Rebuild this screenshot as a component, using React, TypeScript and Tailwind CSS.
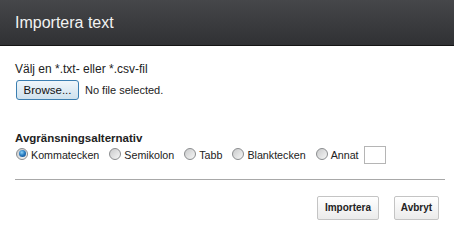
import React from "react";

function Radio({ checked, label }: { checked?: boolean; label: string }) {
  return (
    <label className="mr-[10px] flex items-center">
      <span className="relative mb-[3px] flex h-[12px] w-[12px] items-center justify-center rounded-full border border-[#8a8c8e] bg-gradient-to-br from-[#c9cacb] to-[#f7f7f7]">
        {checked && (
          <span className="h-[7px] w-[7px] rounded-full bg-[radial-gradient(circle_at_40%_35%,#8fd3f7_0%,#2a7fc4_45%,#0d3f7a_100%)]" />
        )}
      </span>
      <span className="ml-[3px] text-[10.7px] leading-[14px] text-[#222]">{label}</span>
    </label>
  );
}

export default function App() {
  return (
    <div
      className="relative h-[227px] w-[454px] overflow-hidden bg-white text-[#222]"
      style={{ fontFamily: '"Liberation Sans", Arial, sans-serif' }}
    >
      <div className="flex h-[46px] items-center border-b border-[#151515] bg-gradient-to-b from-[#46474a] to-[#303134] pl-[15px]">
        <span className="text-[16px] leading-[20px] text-[#f2f2f2]">Importera text</span>
      </div>
      <div className="px-[15px] pt-[16px]">
        <div className="text-[12px] leading-[14px]">Välj en *.txt- eller *.csv-fil</div>
        <div className="mt-[4px] flex items-center">
          <button className="ml-[1px] flex h-[20px] w-[63px] items-center justify-center rounded-[3px] border border-[#3c7fb1] bg-gradient-to-b from-[#f0f6fa] to-[#cfe2ee] text-[11.5px] leading-[14px] text-[#111]">
            Browse...
          </button>
          <span className="ml-[6px] text-[11px] leading-[14px]">No file selected.</span>
        </div>
        <div className="mt-[31px] text-[11.5px] font-bold leading-[14px] text-[#222]">
          Avgränsningsalternativ
        </div>
        <div className="mt-[1px] flex h-[18px] items-center pl-[1px]">
          <Radio checked label="Kommatecken" />
          <Radio label="Semikolon" />
          <Radio label="Tabb" />
          <Radio label="Blanktecken" />
          <Radio label="Annat" />
          <input
            type="text"
            className="-ml-[5px] h-[18px] w-[22px] border border-[#b5b5b5] bg-white outline-none"
          />
        </div>
        <div className="mt-[15px] h-px w-[430px] bg-[#a8a8a8]" />
        <div className="mt-[16px] flex justify-end gap-[15px]">
          <button className="flex h-[24px] w-[62px] items-center justify-center rounded-[2px] border border-[#c4c4c4] bg-gradient-to-b from-white to-[#ebebeb] text-[10px] font-bold leading-[12px] text-[#222]">
            Importera
          </button>
          <button className="flex h-[24px] w-[45px] items-center justify-center rounded-[2px] border border-[#c4c4c4] bg-gradient-to-b from-white to-[#ebebeb] text-[10px] font-bold leading-[12px] text-[#222]">
            Avbryt
          </button>
        </div>
      </div>
    </div>
  );
}
